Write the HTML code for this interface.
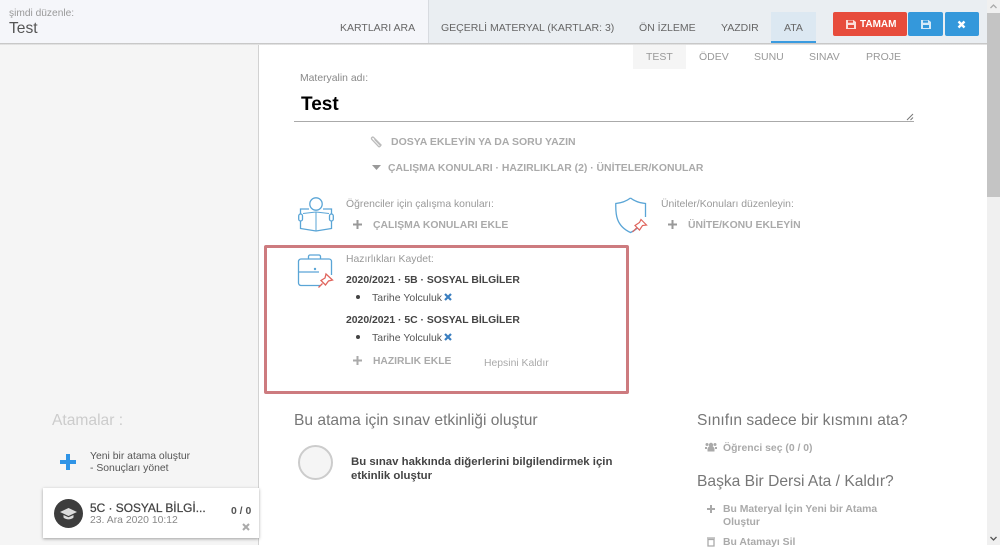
<!DOCTYPE html>
<html lang="tr">
<head>
<meta charset="utf-8">
<title>Test</title>
<style>
html,body{margin:0;padding:0;width:1000px;height:545px;overflow:hidden;background:#fff;font-family:"Liberation Sans",Arial,sans-serif;}
.t{position:absolute;white-space:nowrap;line-height:14px;font-size:12px;color:#777;}
.b{position:absolute;}
svg{position:absolute;overflow:visible;}
.cap{color:#aaa;font-weight:bold;font-size:10.4px;}
.lbl{color:#999;font-size:10.4px;}
.nav{color:#666;font-size:10.5px;}
.sub{color:#999;font-size:10.5px;}
.h{color:#777;font-size:15.6px;line-height:20px;}
.bold{color:#444;font-weight:bold;font-size:10.4px;}
</style>
</head>
<body>
<!-- sidebar -->
<div class="b" style="left:0;top:43px;width:258px;height:502px;background:#f5f5f5;border-right:1px solid #d2d2d2;"></div>
<!-- header -->
<div class="b" style="left:0;top:0;width:428px;height:43px;background:#f5f6fa;"></div>
<div class="b" style="left:428px;top:0;width:559px;height:43px;background:#eaeef2;border-left:1px solid #d8dbe0;box-sizing:border-box;"></div>
<div class="b" style="left:0;top:43px;width:987px;height:2px;background:linear-gradient(#bbb,#eee);"></div>
<div class="t" style="left:9px;top:7px;font-size:10.2px;color:#999;">şimdi düzenle:</div>
<div class="t" style="left:9px;top:19px;font-size:15.6px;line-height:20px;color:#555;">Test</div>
<div class="t nav" style="left:340px;top:21px;">KARTLARI ARA</div>
<div class="t nav" style="left:441px;top:21px;">GEÇERLİ MATERYAL (KARTLAR: 3)</div>
<div class="t nav" style="left:639px;top:21px;">ÖN İZLEME</div>
<div class="t nav" style="left:721px;top:21px;">YAZDIR</div>
<div class="b" style="left:771px;top:12px;width:45px;height:31px;background:#dce8f2;border-bottom:2px solid #3a9be0;box-sizing:border-box;"></div>
<div class="t nav" style="left:784px;top:21px;">ATA</div>
<!-- buttons -->
<div class="b" style="left:833px;top:12px;width:74px;height:24px;background:#e74c3c;border-radius:2px;"></div>
<svg style="left:846px;top:19px" width="10" height="10" viewBox="0 0 10 10"><path d="M0 1h7.500L10 3v7H0z" fill="#fbdcd8"/><rect x="2" y="1.500" width="5" height="2.200" fill="#e74c3c"/><rect x="2" y="6" width="6" height="3" fill="#e74c3c"/></svg>
<div class="t" style="left:860px;top:18px;color:#fff;font-weight:bold;font-size:10px;">TAMAM</div>
<div class="b" style="left:908px;top:12px;width:35px;height:24px;background:#3498db;border-radius:2px;"></div>
<svg style="left:921px;top:19px" width="10" height="10" viewBox="0 0 10 10"><path d="M0 1h7.500L10 3v7H0z" fill="#d5e9f7"/><rect x="2" y="1.500" width="5" height="2.200" fill="#3498db"/><rect x="2" y="6" width="6" height="3" fill="#3498db"/></svg>
<div class="b" style="left:945px;top:12px;width:34px;height:24px;background:#3498db;border-radius:2px;"></div>
<svg style="left:957px;top:20px" width="9" height="9" viewBox="0 0 9 9"><path d="M1.500 1.500l6 6M7.500 1.500l-6 6" stroke="#fff" stroke-width="2.400"/></svg>
<!-- subtabs -->
<div class="b" style="left:633px;top:45px;width:53px;height:24px;background:#f5f5f5;"></div>
<div class="t sub" style="left:646px;top:50px;">TEST</div>
<div class="t sub" style="left:699px;top:50px;">ÖDEV</div>
<div class="t sub" style="left:754px;top:50px;">SUNU</div>
<div class="t sub" style="left:809px;top:50px;">SINAV</div>
<div class="t sub" style="left:866px;top:50px;">PROJE</div>
<!-- material name -->
<div class="t" style="left:300px;top:72px;font-size:10.4px;color:#888;">Materyalin adı:</div>
<div class="t" style="left:301px;top:94px;font-size:19px;line-height:22px;font-weight:bold;color:#000;">Test</div>
<div class="b" style="left:294px;top:121px;width:620px;height:1px;background:#aaa;"></div>
<svg style="left:906px;top:113px" width="8" height="8" viewBox="0 0 8 8"><path d="M1 7L7 1M4.500 7L7 4.500" stroke="#777" stroke-width="1" fill="none"/></svg>
<!-- attach rows -->
<svg style="left:370px;top:135px" width="13" height="13" viewBox="0 0 13 13"><path d="M11.500 10.500L4 2.800C2.500 1.200.6 3 2 4.600L8.500 11.400C9.500 12.400 11 11 10 10L4.500 4.300" fill="none" stroke="#bbb" stroke-width="1.300"/></svg>
<div class="t cap" style="left:391px;top:135px;font-size:10.5px;">DOSYA EKLEYİN YA DA SORU YAZIN</div>
<svg style="left:372px;top:165px" width="9" height="6" viewBox="0 0 9 6"><path d="M0 0h9L4.500 5z" fill="#999"/></svg>
<div class="t cap" style="left:388px;top:162px;">ÇALIŞMA KONULARI · HAZIRLIKLAR (2) · ÜNİTELER/KONULAR</div>
<!-- book icon -->
<svg style="left:297.500px;top:197px" width="36" height="36" viewBox="0 0 36 36" fill="none" stroke="#5aa5d6" stroke-width="1.300"><circle cx="18" cy="7" r="6.200"/><path d="M11 12H2.500V31.500L18 34 33.500 31.500V12H25"/><path d="M18 15V34M5 16.500L18 15 31 16.500" stroke-width="1"/><rect x="0.700" y="17" width="3.800" height="7" rx="1.900" fill="#fff"/><rect x="31.500" y="17" width="3.800" height="7" rx="1.900" fill="#fff"/></svg>
<div class="t lbl" style="left:346px;top:198px;">Öğrenciler için çalışma konuları:</div>
<svg style="left:353px;top:220px" width="9" height="9" viewBox="0 0 9 9"><path d="M4.500 0v9M0 4.500h9" stroke="#999" stroke-width="2"/></svg>
<div class="t cap" style="left:373px;top:219px;">ÇALIŞMA KONULARI EKLE</div>
<!-- shield icon -->
<svg style="left:615px;top:197px" width="34" height="38" viewBox="0 0 34 38" fill="none"><path d="M15.500 1C11 4.500 6 6 .8 6.500.5 17 1 29 15.500 35.500 20 33.500 23 31 25 28M15.500 1C20 4.500 25 6 30.500 6.500L30.500 20" stroke="#5aa5d6" stroke-width="1.300"/><path d="M26 22.500L31.500 28 27.500 28.500 24.500 33 20 28.500 24.500 25.500zM21.500 31L17.500 35" stroke="#e0645c" stroke-width="1.200" fill="#fff"/></svg>
<div class="t lbl" style="left:661px;top:198px;">Üniteler/Konuları düzenleyin:</div>
<svg style="left:668px;top:220px" width="9" height="9" viewBox="0 0 9 9"><path d="M4.500 0v9M0 4.500h9" stroke="#999" stroke-width="2"/></svg>
<div class="t cap" style="left:688px;top:219px;">ÜNİTE/KONU EKLEYİN</div>
<!-- red box -->
<div class="b" style="left:264px;top:245px;width:365px;height:149px;box-sizing:border-box;border:3px solid #cd7b7f;border-radius:2px;background:#fff;"></div>
<svg style="left:298px;top:254px" width="36" height="34" viewBox="0 0 36 34" fill="none"><path d="M10.500 5V2.500a1.500 1.500 0 0 1 1.500-1.500h9a1.500 1.500 0 0 1 1.500 1.500V5" stroke="#5aa5d6" stroke-width="1.300"/><path d="M22 31.500H3a2.500 2.500 0 0 1-2.500-2.500V7.500A2.500 2.500 0 0 1 3 5h28a2.500 2.500 0 0 1 2.500 2.500V21M.5 18H21" stroke="#5aa5d6" stroke-width="1.300"/><circle cx="17" cy="15" r="1.200" fill="#5aa5d6"/><path d="M28 20L34.500 26 30.500 27 27.500 31 23 26.500 27 24zM24.500 29.500L20.500 33.500" stroke="#e0645c" stroke-width="1.300" fill="#fff"/></svg>
<div class="t lbl" style="left:346px;top:253px;">Hazırlıkları Kaydet:</div>
<div class="t bold" style="left:346px;top:274px;">2020/2021 · 5B · SOSYAL BİLGİLER</div>
<div class="b" style="left:356px;top:295px;width:4px;height:4px;background:#444;border-radius:50%;"></div>
<div class="t" style="left:372px;top:291px;font-size:10.5px;color:#555;">Tarihe Yolculuk</div>
<svg style="left:444px;top:293px" width="8" height="8" viewBox="0 0 8 8"><path d="M1 1l6 6M7 1l-6 6" stroke="#3a7fc0" stroke-width="2.200"/></svg>
<div class="t bold" style="left:346px;top:314px;">2020/2021 · 5C · SOSYAL BİLGİLER</div>
<div class="b" style="left:356px;top:335px;width:4px;height:4px;background:#444;border-radius:50%;"></div>
<div class="t" style="left:372px;top:331px;font-size:10.5px;color:#555;">Tarihe Yolculuk</div>
<svg style="left:444px;top:333px" width="8" height="8" viewBox="0 0 8 8"><path d="M1 1l6 6M7 1l-6 6" stroke="#3a7fc0" stroke-width="2.200"/></svg>
<svg style="left:353px;top:356px" width="9" height="9" viewBox="0 0 9 9"><path d="M4.500 0v9M0 4.500h9" stroke="#aaa" stroke-width="2"/></svg>
<div class="t cap" style="left:373px;top:355px;font-size:10.3px;">HAZIRLIK EKLE</div>
<div class="t" style="left:484px;top:357px;font-size:10.4px;color:#aaa;">Hepsini Kaldır</div>
<!-- sidebar content -->
<div class="t" style="left:52px;top:411px;font-size:15.6px;line-height:20px;color:#ccc;">Atamalar :</div>
<svg style="left:60px;top:454px" width="16" height="16" viewBox="0 0 16 16"><path d="M8 0v16M0 8h16" stroke="#2f94e6" stroke-width="4"/></svg>
<div class="t" style="left:90px;top:451px;font-size:10.4px;line-height:12px;color:#555;">Yeni bir atama oluştur<br>- Sonuçları yönet</div>
<div class="b" style="left:43px;top:488px;width:216px;height:50px;background:#fff;box-shadow:0 1px 3px rgba(0,0,0,.35);"></div>
<div class="b" style="left:54px;top:499px;width:29px;height:29px;border-radius:50%;background:#3d3d3d;"></div>
<svg style="left:60px;top:507px" width="17" height="13" viewBox="0 0 17 13"><path d="M8.500 1L17 5 8.500 9 0 5z" fill="#ddd"/><path d="M3.500 8v2.500C6 13 11 13 13.500 10.500V8L8.500 10.300z" fill="#ddd"/></svg>
<div class="t" style="left:90px;top:501px;font-size:11.900px;color:#444;-webkit-text-stroke:.25px #444;">5C · SOSYAL BİLGİ...</div>
<div class="t" style="left:90px;top:514px;font-size:10.4px;color:#888;">23. Ara 2020 10:12</div>
<div class="t" style="left:231px;top:505px;font-size:10.4px;font-weight:bold;color:#555;">0 / 0</div>
<svg style="left:242px;top:523px" width="8" height="8" viewBox="0 0 8 8"><path d="M1 1l6 6M7 1l-6 6" stroke="#aaa" stroke-width="2"/></svg>
<!-- main lower -->
<div class="t h" style="left:294px;top:411px;">Bu atama için sınav etkinliği oluştur</div>
<div class="b" style="left:298px;top:445px;width:35px;height:35px;box-sizing:border-box;border:2px solid #ccc;border-radius:50%;background:#f5f5f5;"></div>
<div class="t bold" style="left:351px;top:455px;line-height:14px;font-size:11.400px;">Bu sınav hakkında diğerlerini bilgilendirmek için<br>etkinlik oluştur</div>
<div class="t h" style="left:697px;top:411px;">Sınıfın sadece bir kısmını ata?</div>
<svg style="left:705px;top:442px" width="12" height="10" viewBox="0 0 12 10"><circle cx="6" cy="3" r="2.200" fill="#aaa"/><circle cx="2" cy="2.500" r="1.500" fill="#aaa"/><circle cx="10" cy="2.500" r="1.500" fill="#aaa"/><path d="M2.500 9.500V7a3.500 3 0 0 1 7 0v2.500zM0 7V5h2v2zM10 7V5h2v2z" fill="#aaa"/></svg>
<div class="t" style="left:723px;top:442px;font-size:10.400px;font-weight:bold;color:#aaa;">Öğrenci seç (0 / 0)</div>
<div class="t h" style="left:697px;top:472px;">Başka Bir Dersi Ata / Kaldır?</div>
<svg style="left:707px;top:505px" width="8" height="8" viewBox="0 0 8 8"><path d="M4 0v8M0 4h8" stroke="#aaa" stroke-width="2"/></svg>
<div class="t" style="left:723px;top:504px;font-size:10.400px;line-height:12.500px;font-weight:bold;color:#aaa;">Bu Materyal İçin Yeni bir Atama<br>Oluştur</div>
<svg style="left:707px;top:537px" width="8" height="9" viewBox="0 0 8 9"><path d="M0 1h8M1 2.500h6V9H1z" stroke="#aaa" stroke-width="1.300" fill="none"/></svg>
<div class="t" style="left:723px;top:536px;font-size:10.400px;font-weight:bold;color:#aaa;">Bu Atamayı Sil</div>
<!-- scrollbar -->
<div class="b" style="left:987px;top:0;width:13px;height:545px;background:#f0f0f0;"></div>
<div class="b" style="left:987px;top:13px;width:13px;height:184px;background:#c4c4c4;"></div>
<svg style="left:990px;top:4px" width="7" height="5" viewBox="0 0 7 5"><path d="M.5 4L3.500 1l3 3" fill="none" stroke="#aaa" stroke-width="1.300"/></svg>
<svg style="left:990px;top:536px" width="7" height="5" viewBox="0 0 7 5"><path d="M.5 1L3.500 4l3-3" fill="none" stroke="#555" stroke-width="1.300"/></svg>
</body>
</html>
